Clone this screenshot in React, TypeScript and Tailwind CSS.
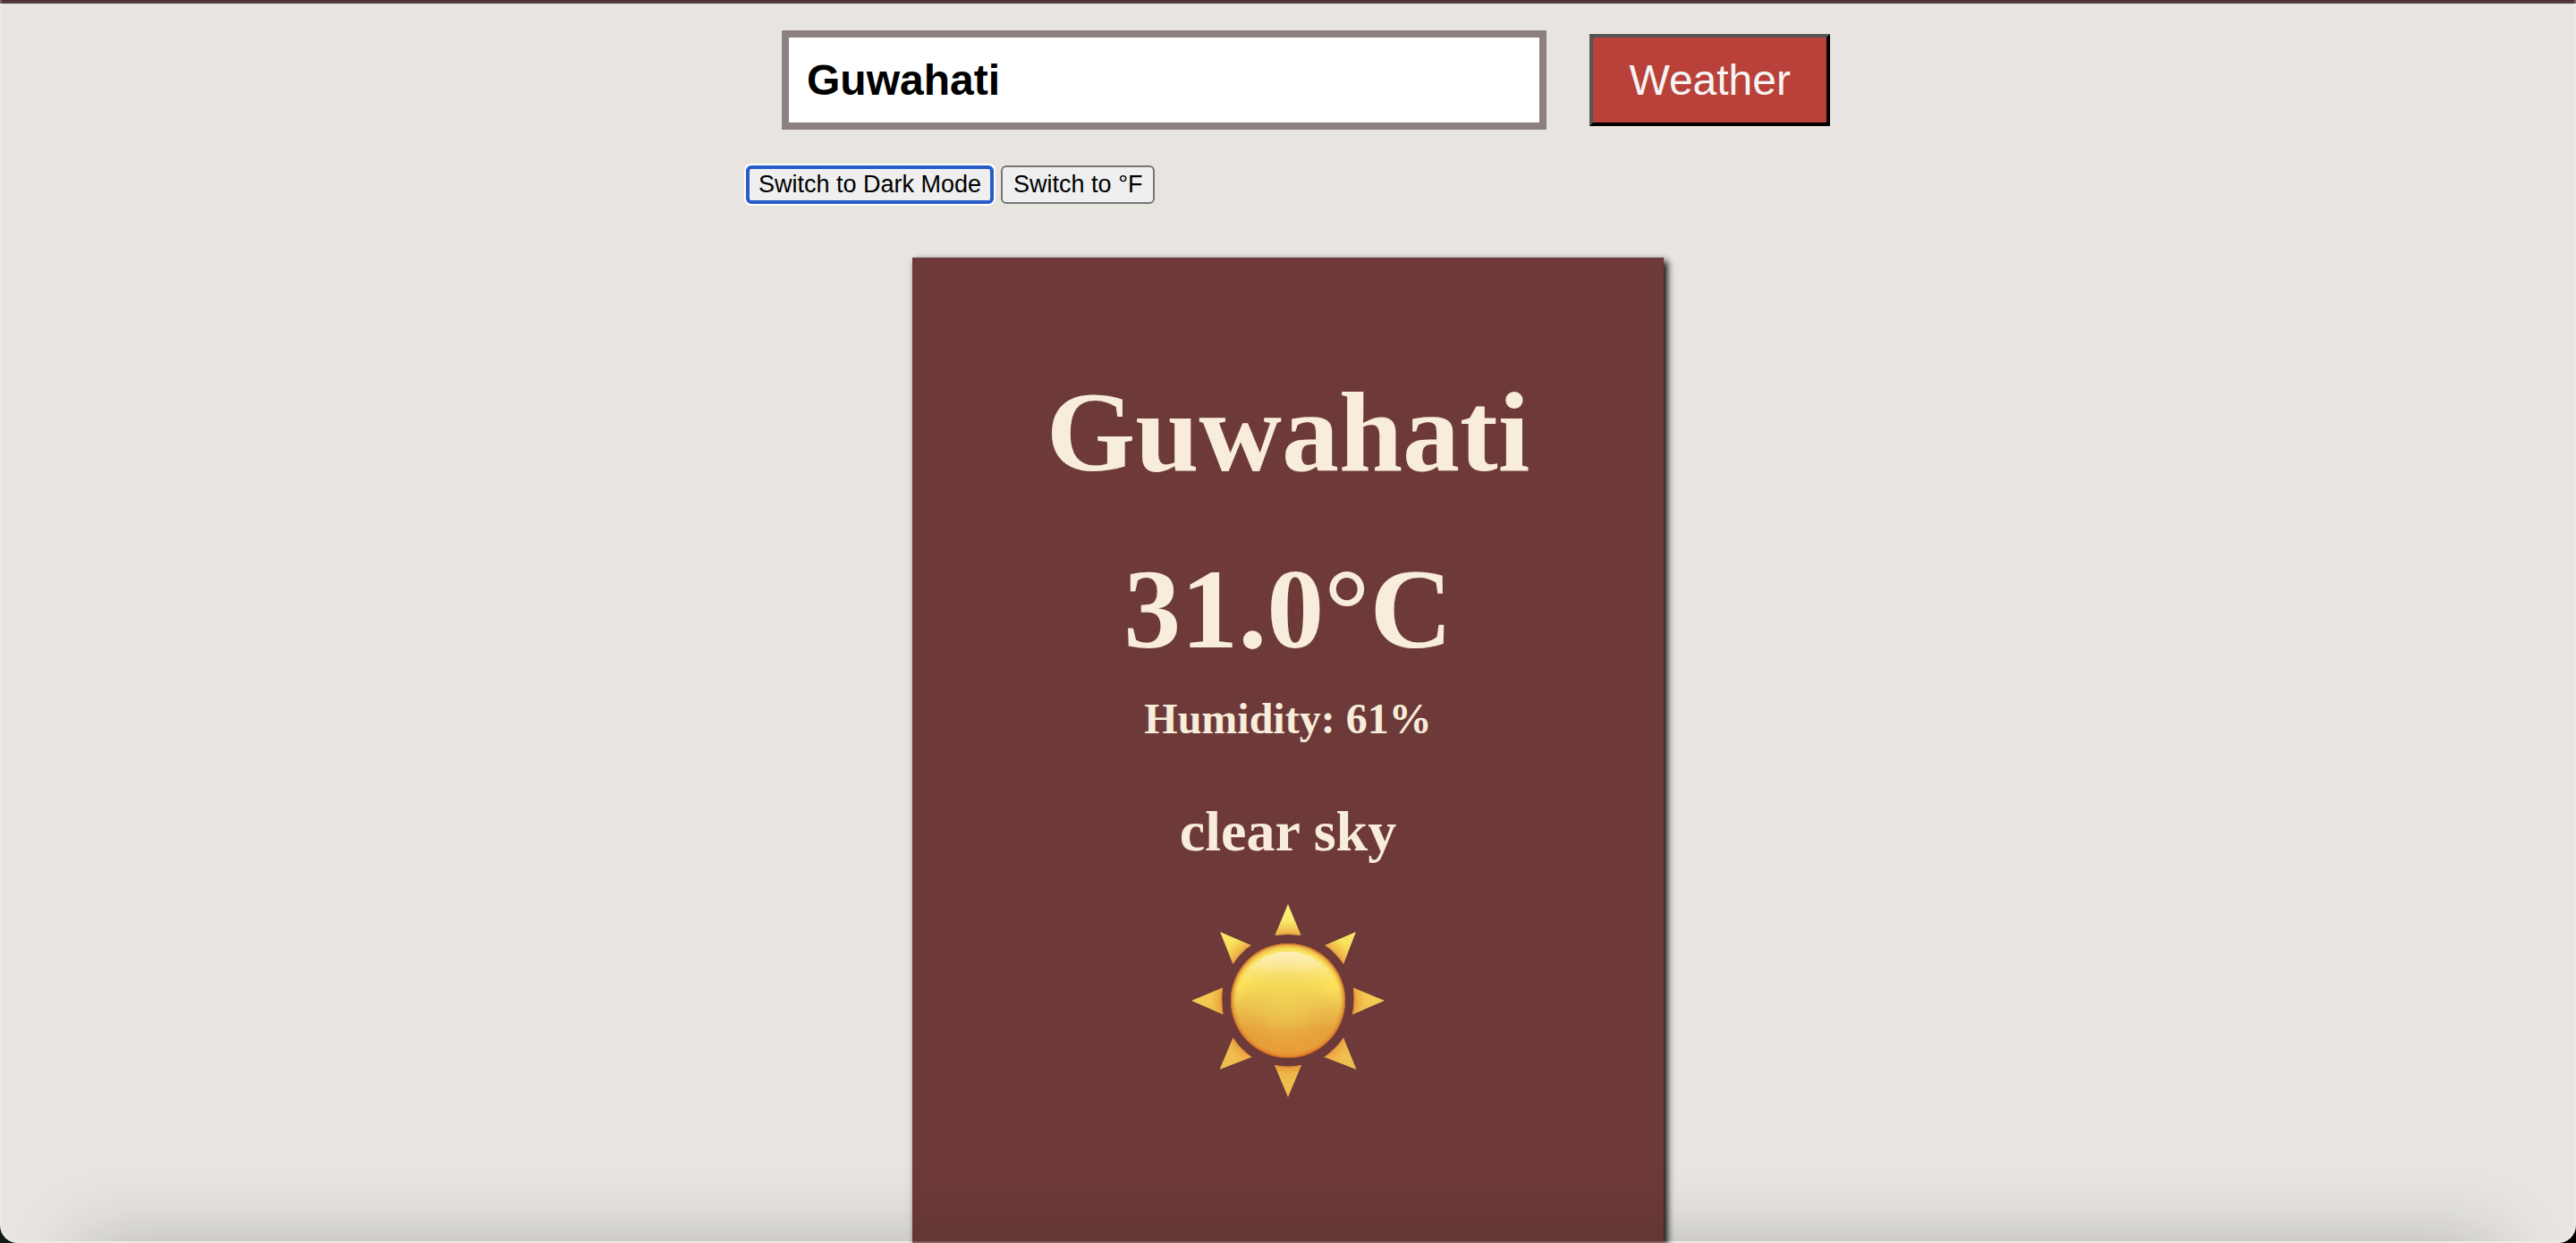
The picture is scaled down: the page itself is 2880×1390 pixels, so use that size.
import { useState } from "react";

const RAYS = [
  "M108 0L93.5 35Q108 33 122.5 35Z",
  "M184 31L149.5 46Q161.5 54.5 170 67Z",
  "M216 108L181 93.5Q183 108 180 123.5Z",
  "M184.5 185L170 149.5Q161.5 162 148.5 171Z",
  "M108 216L93 180Q108 183.5 123 180Z",
  "M31.5 185L46.5 149.5Q54.5 162 67.5 171Z",
  "M0 108L35 93.5Q33 108 35.5 123.5Z",
  "M32 31L66.5 46Q54.5 54.5 46.5 67Z",
].join("");

function Sun() {
  return (
    <svg viewBox="0 0 216 216" className="size-[216px]" role="img" aria-label="Sun">
      <defs>
        <linearGradient id="ray" gradientUnits="userSpaceOnUse" x1="0" y1="0" x2="0" y2="216">
          <stop offset="0" stopColor="#fbf47c" />
          <stop offset="0.25" stopColor="#f8dd58" />
          <stop offset="0.6" stopColor="#f2c24f" />
          <stop offset="1" stopColor="#efbb4f" />
        </linearGradient>
        <radialGradient id="rayBase" gradientUnits="userSpaceOnUse" cx="108" cy="108" r="108">
          <stop offset="0.67" stopColor="#d9782c" stopOpacity="0.95" />
          <stop offset="0.71" stopColor="#e7963a" stopOpacity="0.6" />
          <stop offset="0.84" stopColor="#f0b84a" stopOpacity="0" />
        </radialGradient>
        <linearGradient id="disc" x1="0" y1="0" x2="0" y2="1">
          <stop offset="0" stopColor="#f8e35c" />
          <stop offset="0.38" stopColor="#f9e05a" />
          <stop offset="0.55" stopColor="#edc250" />
          <stop offset="0.76" stopColor="#e6a23c" />
          <stop offset="1" stopColor="#e99b37" />
        </linearGradient>
        <radialGradient id="glow" cx="0.48" cy="0.52" r="0.4">
          <stop offset="0" stopColor="#f0d254" stopOpacity="0.6" />
          <stop offset="0.5" stopColor="#ebcb52" stopOpacity="0.4" />
          <stop offset="1" stopColor="#e8b048" stopOpacity="0" />
        </radialGradient>
        <radialGradient id="rim" cx="0.5" cy="0.5" r="0.5">
          <stop offset="0.9" stopColor="#e08a30" stopOpacity="0" />
          <stop offset="0.96" stopColor="#de812d" stopOpacity="0.45" />
          <stop offset="1" stopColor="#c65c22" stopOpacity="0.95" />
        </radialGradient>
        <linearGradient id="shine" gradientUnits="userSpaceOnUse" x1="0" y1="53" x2="0" y2="94">
          <stop offset="0" stopColor="#fcefbb" />
          <stop offset="0.35" stopColor="#fbecaa" stopOpacity="0.8" />
          <stop offset="1" stopColor="#f9e25c" stopOpacity="0" />
        </linearGradient>
      </defs>
      <path d={RAYS} fill="url(#ray)" />
      <path d={RAYS} fill="url(#rayBase)" />
      <circle cx="108" cy="108" r="64" fill="url(#disc)" />
      <circle cx="108" cy="108" r="64" fill="url(#glow)" />
      <ellipse cx="108" cy="97" rx="52" ry="44" fill="url(#shine)" />
      <circle cx="108" cy="108" r="64" fill="url(#rim)" />
    </svg>
  );
}

export default function App() {
  const [city, setCity] = useState("Guwahati");

  return (
    <div className="bg-linear-to-r from-[#0d1c14] to-black">
      <div className="relative flex min-h-screen flex-col overflow-hidden rounded-b-[20px] bg-[#e8e5e0] font-['Liberation_Sans',Arial,sans-serif] text-black">
        <div className="h-1 border-b-2 border-[#514241] bg-[#4f3035]" />

        <div className="mx-auto mt-[30px] w-full max-w-[1212px]">
          <form className="flex items-center gap-12 pl-10" onSubmit={(e) => e.preventDefault()}>
            <input
              type="text"
              aria-label="City"
              value={city}
              onChange={(e) => setCity(e.target.value)}
              className="min-w-0 flex-1 border-8 border-[#8d807f] bg-white p-5 text-[48px] leading-[55px] font-bold outline-none"
            />
            <button
              type="submit"
              className="border-4 border-t-[#555] border-r-black border-b-black border-l-[#555] bg-[#ba4139] px-10 py-5 text-[48px] leading-[55px] text-[#f5f5f5]"
            >
              Weather
            </button>
          </form>
          <div className="mt-10 flex gap-2 text-[27px] leading-[31px]">
            <button
              type="button"
              className="rounded-md border-4 border-[#285cc8] bg-[#efefef] px-2.5 py-0.5 ring-2 ring-white"
            >
              Switch to Dark Mode
            </button>
            <button
              type="button"
              className="rounded-md border-2 border-[#767676] bg-[#efefef] px-3 py-1"
            >
              Switch to °F
            </button>
          </div>
        </div>

        <main className="mx-auto mt-[60px] flex w-full max-w-[840px] flex-1 flex-col items-center bg-[#6d3a39] px-10 pt-[131px] pb-40 text-center font-['Liberation_Serif',serif] font-bold text-[#f8ecda] shadow-[4px_4px_8px_#000]">
          <h1 className="text-[128px] leading-none">Guwahati</h1>
          <p className="mt-[70px] text-[128px] leading-none">31.0°C</p>
          <p className="mt-[35px] text-[48px] leading-none">Humidity: 61%</p>
          <p className="mt-[70px] mb-[49px] text-[64px] leading-none">clear sky</p>
          <Sun />
        </main>

        <div className="pointer-events-none absolute inset-0 overflow-hidden rounded-b-[20px] border-x-2 border-b-2 border-white/20">
          <div className="absolute inset-x-[90px] -bottom-40 h-40 shadow-[0_0_80px_rgba(20,30,20,0.24)]" />
        </div>
      </div>
    </div>
  );
}
